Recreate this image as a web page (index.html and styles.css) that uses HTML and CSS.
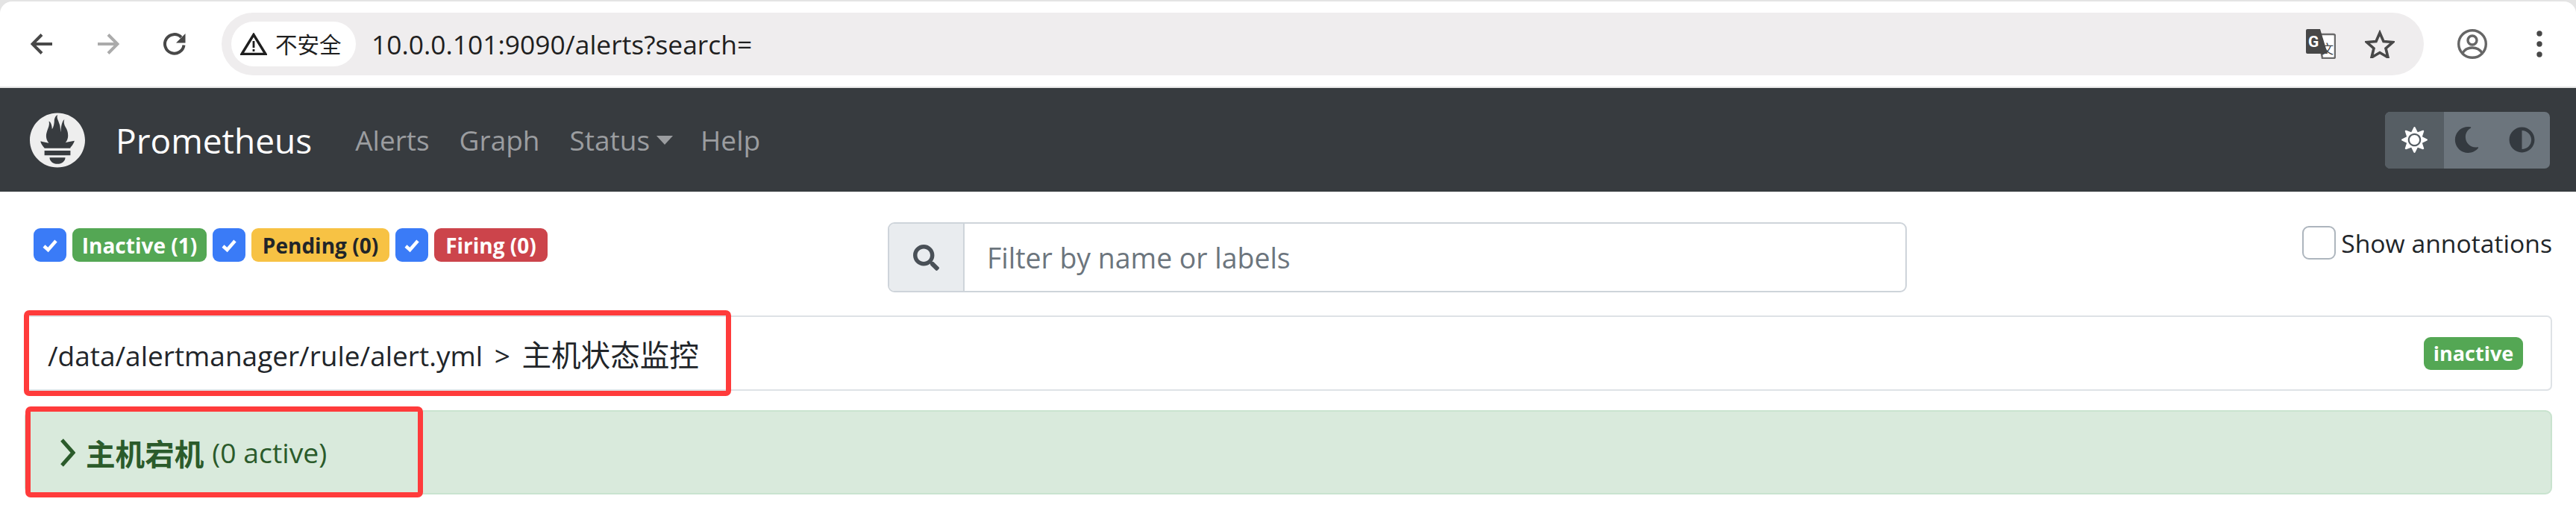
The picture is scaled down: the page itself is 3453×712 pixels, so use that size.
FILE: index.html
```html
<!DOCTYPE html>
<html lang="zh-CN">
<head>
<meta charset="utf-8">
<title>Prometheus</title>
<link rel="stylesheet" href="styles.css">
</head>
<body>
<header class="browser">
  <div class="toolbar">
    <span class="tool"><svg class="i30" viewBox="0 0 30 30"><path class="st dark" d="M29 15H3M15 2.5 2.5 15 15 27.5"/></svg></span>
    <span class="tool"><svg class="i30" viewBox="0 0 30 30"><path class="st light" d="M1 15h26M15 2.5 27.5 15 15 27.5"/></svg></span>
    <span class="tool"><svg class="i30" viewBox="0 0 30 30"><path class="st dark" d="M27.5 16.5A12.8 12.8 0 1 1 24 6"/><path class="fl" d="M29.5 1v12.5H17z"/></svg></span>
    <div class="omnibox">
      <div class="secure">
        <svg class="warn" viewBox="0 0 36 30"><path class="tri" d="M18 2.5 2 28.5h32z"/><path class="mark" d="M16.6 11h2.8v9h-2.8zM16.6 22h2.8v3h-2.8z"/></svg>
        <span class="secure-text">不安全</span>
      </div>
      <span class="url">10.0.0.101:9090/alerts?search=</span>
      <div class="omni-actions">
        <svg class="translate" viewBox="0 0 40 40">
          <path class="tr-back" d="M16 7h21a2 2 0 0 1 2 2v28a2 2 0 0 1-2 2H22z"/>
          <path class="tr-front" d="M2 0h17l10 33H2a2 2 0 0 1-2-2V2a2 2 0 0 1 2-2z"/>
          <text class="tr-g" x="3" y="24">G</text>
          <text class="tr-w" x="20" y="33">文</text>
        </svg>
        <svg class="star" viewBox="0 0 40 38"><path class="st dark thin" d="M20 4l5 11.5 12.5 1-9.500 8.300 3 12.200L20 30.500 9 37l3-12.200L2.500 16.500l12.500-1z"/></svg>
      </div>
    </div>
    <span class="tool wide"><svg class="avatar" viewBox="0 0 40 40"><circle class="st gray" cx="20" cy="20" r="18.300"/><circle class="st gray" cx="20" cy="15" r="6"/><path class="st gray" d="M7 32c3-5 8-7 13-7s10 2 13 7"/></svg></span>
    <span class="tool wide"><svg class="dots" viewBox="0 0 8 36"><circle class="fl" cx="4" cy="4" r="3.700"/><circle class="fl" cx="4" cy="18" r="3.700"/><circle class="fl" cx="4" cy="32" r="3.700"/></svg></span>
  </div>
</header>

<nav class="navbar">
  <svg class="logo" viewBox="0 0 115.333 114"><path d="m57.667 0C25.82 0 0 25.512 0 56.984c0 31.473 25.82 56.987 57.667 56.987 31.844 0 57.665-25.514 57.665-56.987C115.332 25.512 89.511 0 57.667 0zm0 106.66c-9.061 0-16.409-6.053-16.409-13.518h32.815c0 7.465-7.344 13.518-16.406 13.518zm27.102-17.996H30.56v-9.827h54.21v9.827zm-.194-14.885H30.716c-.179-.206-.363-.41-.537-.618-5.548-6.737-6.854-10.254-8.123-13.838-.022-.119 6.727 1.378 11.512 2.456 0 0 2.463.57 6.062 1.226-3.456-4.051-5.508-9.201-5.508-14.466 0-11.559 8.865-21.659 5.669-30.823 3.113.254 6.44 6.571 6.664 16.449 3.311-4.575 4.697-12.928 4.697-18.05 0-5.304 3.495-11.466 6.991-11.676-3.116 5.135.808 9.536 4.297 20.458 1.31 4.101 1.143 11.007 2.153 15.386.335-9.096 1.899-22.368 7.67-26.95-2.545 5.769.378 12.985 2.375 16.456 3.223 5.597 5.177 9.836 5.177 17.855 0 5.375-1.985 10.438-5.333 14.396 3.808-.715 6.438-1.359 6.438-1.359l12.369-2.413c.002-.001-1.795 7.387-8.695 14.51z"/></svg>
  <a class="brand">Prometheus</a>
  <div class="nav-links">
    <a class="nav-link">Alerts</a>
    <a class="nav-link">Graph</a>
    <a class="nav-link">Status<span class="caret"></span></a>
    <a class="nav-link">Help</a>
  </div>
  <div class="theme">
    <span class="theme-btn active"><svg class="sun" viewBox="0 0 512 512"><path d="M256 160c-52.900 0-96 43.100-96 96s43.100 96 96 96 96-43.100 96-96-43.100-96-96-96zm246.400 80.500l-94.700-47.300 33.500-100.400c4.500-13.600-8.400-26.500-21.900-21.900l-100.400 33.500-47.400-94.800c-6.400-12.800-24.600-12.800-31 0l-47.300 94.700L92.700 70.800c-13.600-4.500-26.500 8.400-21.900 21.900l33.500 100.400-94.700 47.400c-12.800 6.400-12.800 24.600 0 31l94.700 47.300-33.500 100.500c-4.500 13.600 8.400 26.500 21.900 21.900l100.400-33.500 47.300 94.700c6.400 12.800 24.600 12.800 31 0l47.300-94.700 100.400 33.500c13.600 4.500 26.500-8.400 21.900-21.900l-33.500-100.400 94.700-47.300c13-6.500 13-24.700.2-31.100zm-155.900 106c-49.900 49.900-131.100 49.900-181 0-49.900-49.900-49.900-131.100 0-181 49.900-49.900 131.100-49.900 181 0 49.900 49.900 49.900 131.100 0 181z"/></svg></span>
    <span class="theme-btn"><svg class="moon" viewBox="0 0 512 512"><path d="M283.211 512c78.962 0 151.079-35.925 198.857-94.792 7.068-8.708-.639-21.430-11.562-19.350-124.203 23.654-238.262-71.576-238.262-196.954 0-72.222 38.662-138.635 101.498-174.394 9.686-5.512 7.250-20.197-3.756-22.230A258.156 258.156 0 0 0 283.211 0c-141.309 0-256 114.511-256 256 0 141.309 114.511 256 256 256z"/></svg></span>
    <span class="theme-btn"><svg class="adjust" viewBox="0 0 512 512"><path d="M8 256c0 136.966 111.033 248 248 248s248-111.034 248-248S392.966 8 256 8 8 119.033 8 256zm248 184V72c101.705 0 184 82.311 184 184 0 101.705-82.311 184-184 184z"/></svg></span>
  </div>
</nav>

<main class="content">
  <section class="filters">
    <div class="states">
      <span class="check"><svg viewBox="0 0 24 24"><path d="M4 13l5.500 5L20 6"/></svg></span>
      <span class="badge green">Inactive (1)</span>
      <span class="check"><svg viewBox="0 0 24 24"><path d="M4 13l5.500 5L20 6"/></svg></span>
      <span class="badge yellow">Pending (0)</span>
      <span class="check"><svg viewBox="0 0 24 24"><path d="M4 13l5.500 5L20 6"/></svg></span>
      <span class="badge red">Firing (0)</span>
    </div>
    <div class="search">
      <span class="search-addon"><svg viewBox="0 0 512 512"><path d="M505 442.700L405.300 343c-4.500-4.500-10.600-7-17-7H372c27.600-35.300 44-79.700 44-128C416 93.100 322.900 0 208 0S0 93.100 0 208s93.100 208 208 208c48.300 0 92.700-16.400 128-44v16.300c0 6.400 2.500 12.500 7 17l99.700 99.700c9.400 9.400 24.600 9.400 33.900 0l28.300-28.300c9.400-9.400 9.400-24.600.1-34zM208 336c-70.700 0-128-57.200-128-128 0-70.700 57.200-128 128-128 70.700 0 128 57.200 128 128 0 70.700-57.200 128-128 128z"/></svg></span>
      <span class="search-input">Filter by name or labels</span>
    </div>
    <div class="annot">
      <span class="annot-box"></span>
      <span class="annot-label">Show annotations</span>
    </div>
  </section>

  <section class="group">
    <span class="group-title">/data/alertmanager/rule/alert.yml &gt; <span class="cjk">主机状态监控</span></span>
    <span class="state-badge">inactive</span>
    <span class="mark-box group-mark"></span>
  </section>

  <section class="rule">
    <svg class="chev" viewBox="0 0 20 38"><path d="M2 2l15 17L2 36"/></svg>
    <strong class="rule-name">主机宕机</strong>
    <span class="rule-count">(0 active)</span>
    <span class="mark-box rule-mark"></span>
  </section>
</main>
</body>
</html>
```
FILE: styles.css
```css
* { box-sizing: border-box; }
html, body { margin: 0; padding: 0; height: 712px; overflow: hidden; background: #fff; }
body { font-family: "Open Sans", "Noto Sans CJK SC", sans-serif; color: #212529; }

.browser { height: 118px; background: #e4e4e4; padding-top: 2px; border-bottom: 2px solid #e4e4e4; }
.toolbar { height: 114px; background: #fff; border-radius: 16px 16px 0 0; display: flex; align-items: center; padding-left: 11px; padding-right: 4px; }
.tool { width: 89px; display: flex; justify-content: center; align-items: center; flex: none; }
.tool.wide { width: 90px; }
.tool:nth-of-type(4) { margin-left: 20px; }
.i30 { width: 30px; height: 30px; }
.st { fill: none; stroke-width: 4; }
.st.dark { stroke: #484848; }
.st.light { stroke: #ababab; }
.st.gray { stroke: #666; stroke-width: 3.400; }
.st.thin { stroke-width: 3.600; }
.fl { fill: #474747; }

.omnibox { flex: 1; height: 84px; margin-left: 19px; border-radius: 42px; background: #efedee; display: flex; align-items: center; padding-left: 13px; padding-right: 39px; }
.secure { width: 167px; height: 60px; border-radius: 30px; background: #fff; display: flex; align-items: center; padding-left: 12px; flex: none; }
.warn { width: 36px; height: 30px; }
.tri { fill: none; stroke: #1f1f1f; stroke-width: 3.400; }
.mark { fill: #1f1f1f; }
.secure-text { margin-left: 11px; font-size: 29.500px; line-height: 1; color: #1f1f1f; font-family: "Noto Sans CJK SC", sans-serif; }
.url { margin-left: 21px; font-size: 35.400px; color: #1f1f1f; white-space: nowrap; }
.omni-actions { margin-left: auto; display: flex; align-items: center; gap: 39px; }
.translate { width: 40px; height: 40px; }
.tr-back { fill: #fff; stroke: #6b6b6b; stroke-width: 2.500; }
.tr-front { fill: #474747; }
.tr-g { fill: #fff; font-size: 21px; font-weight: 700; font-family: "Roboto", sans-serif; }
.tr-w { fill: #474747; font-size: 17px; font-family: "Noto Sans CJK SC", sans-serif; }
.star { width: 40px; height: 38px; }
.avatar { width: 40px; height: 40px; }
.dots { width: 8px; height: 36px; }

.navbar { height: 139px; background: #373b3f; display: flex; align-items: center; padding-left: 40px; padding-right: 35px; }
.logo { width: 74px; height: 74px; fill: #eeeeee; flex: none; }
.brand { margin-left: 41px; font-size: 46px; line-height: 1; color: #fff; }
.nav-links { margin-left: 58px; display: flex; align-items: center; gap: 40px; }
.nav-link { font-size: 37px; line-height: 1; color: #9b9da0; display: flex; align-items: center; }
.nav-link:nth-child(4) { margin-left: -3px; }
.caret { margin-left: 9px; width: 0; height: 0; border-top: 12px solid #9b9da0; border-left: 11px solid transparent; border-right: 11px solid transparent; }
.theme { margin-left: auto; width: 221px; height: 76px; border-radius: 7px; background: #6c757d; display: flex; overflow: hidden; }
.theme-btn { flex: 1; display: flex; align-items: center; justify-content: center; fill: #343a40; }
.theme-btn:nth-child(1) { flex: none; width: 79px; background: #565e64; fill: #fff; }
.theme-btn:nth-child(2) { flex: none; width: 71px; padding-right: 10px; }
.theme-btn:nth-child(3) { padding-right: 4px; }
.sun { width: 35px; height: 35px; }
.moon { width: 35px; height: 35px; }
.adjust { width: 35px; height: 35px; }

.content { padding: 41px 32px 0 33px; }
.filters { display: grid; grid-template-columns: 1157px 1366px 1fr; align-items: start; }
.states { display: flex; align-items: center; gap: 8px; padding-top: 8px; padding-left: 12px; }
.check { width: 44px; height: 45px; border-radius: 9px; background: #3a7bf7; display: flex; align-items: center; justify-content: center; }
.check svg { width: 24px; height: 24px; fill: none; stroke: #fff; stroke-width: 4.500; }
.badge { height: 45px; border-radius: 9px; display: flex; align-items: center; justify-content: center; font-size: 28px; font-weight: 700; color: #fff; white-space: nowrap; }
.badge.green { width: 180px; background: #54a754; }
.badge.yellow { width: 185px; background: #f7c244; color: #212529; }
.badge.red { width: 152px; background: #cc444b; }
.search { height: 94px; display: flex; border: 2px solid #ced4da; border-radius: 9px; overflow: hidden; }
.search-addon { width: 101px; flex: none; background: #e9ecef; border-right: 2px solid #ced4da; display: flex; align-items: center; justify-content: center; }
.search-addon svg { width: 35px; height: 35px; fill: #495057; }
.search-input { flex: 1; display: flex; align-items: center; padding-left: 30px; font-size: 37.400px; color: #6c757d; }
.annot { display: flex; justify-content: flex-end; align-items: center; padding-top: 4px; }
.annot-box { width: 45px; height: 45px; border: 2px solid #adb5bd; border-radius: 9px; background: #fff; }
.annot-label { margin-left: 7px; padding-top: 2px; font-size: 33.700px; line-height: 45px; white-space: nowrap; }

.group { position: relative; margin-top: 31px; height: 101px; border: 2px solid #dee2e6; border-radius: 7px; display: flex; align-items: center; justify-content: space-between; padding: 0 37px 0 29px; }
.group-title { font-size: 37px; white-space: nowrap; word-spacing: 6px; }
.cjk { font-size: 39.600px; font-family: "Noto Sans CJK SC", sans-serif; }
.state-badge { width: 133px; height: 44px; border-radius: 9px; background: #54a754; color: #fff; font-size: 27px; font-weight: 700; display: flex; align-items: center; justify-content: center; }
.rule { position: relative; margin-top: 26px; height: 113px; background: #d9eadc; border: 2px solid #c9e3cf; border-radius: 9px; display: flex; align-items: center; padding-left: 46px; color: #2b5b2b; }
.chev { width: 20px; height: 38px; fill: none; stroke: #2b5b2b; stroke-width: 5; }
.rule-name { margin-left: 14px; font-size: 39.600px; font-weight: 700; white-space: nowrap; font-family: "Noto Sans CJK SC", sans-serif; }
.rule-count { margin-left: 11px; font-size: 37.300px; white-space: nowrap; }
.mark-box { position: absolute; border: 7px solid #ff3b3b; border-radius: 7px; }
.group-mark { left: -3px; top: -9px; width: 948px; height: 115px; }
.rule-mark { left: -1px; top: -7px; width: 533px; height: 122px; }
```
